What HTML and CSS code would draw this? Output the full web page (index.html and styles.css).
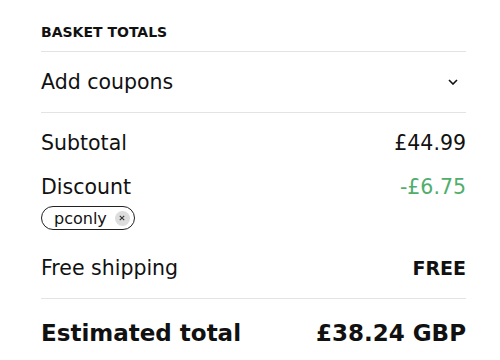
FILE: index.html
```html
<!DOCTYPE html>
<html>
<head>
<meta charset="utf-8">
<link rel="stylesheet" href="styles.css">
</head>
<body>
<div class="totals">
  <h2 class="title">BASKET TOTALS</h2>
  <div class="coupons">
    <span>Add coupons</span>
    <svg class="chev" width="10" height="6" viewBox="0 0 10 6"><path d="M1 1l4 4 4-4" fill="none" stroke="#111" stroke-width="1.6"/></svg>
  </div>
  <div class="lines">
    <div class="row"><span>Subtotal</span><span>£44.99</span></div>
    <div class="row disc"><span>Discount</span><span class="green">-£6.75</span></div>
    <div class="chip">pconly <span class="x"><svg width="6" height="6" viewBox="0 0 6 6"><path d="M0.8 0.8l4.4 4.4M5.2 0.8l-4.4 4.4" stroke="#333" stroke-width="1.1"/></svg></span></div>
    <div class="row ship"><span>Free shipping</span><span class="strong">FREE</span></div>
  </div>
  <div class="total"><span>Estimated total</span><span>£38.24 GBP</span></div>
</div>
</body>
</html>
```
FILE: styles.css
```css
body { margin: 0; background: #fff; color: #111; font-family: "DejaVu Sans", sans-serif; }
.totals { padding: 0 34px 0 41px; }
.title { margin: 0; padding: 24px 0 11px; font-size: 14px; line-height: 16px; font-weight: 700; border-bottom: 1px solid #e3e3e3; }
.coupons { height: 60px; display: flex; align-items: center; justify-content: space-between; font-size: 20.5px; border-bottom: 1px solid #e3e3e3; }
.chev { margin-right: 8px; }
.lines { padding: 19px 0 19px; border-bottom: 1px solid #e3e3e3; }
.row { display: flex; justify-content: space-between; align-items: center; font-size: 20.5px; line-height: 22px; }
.disc { margin-top: 22px; }
.green { color: #4fae6c; }
.chip { display: inline-flex; align-items: center; gap: 8px; margin-top: 8px; height: 22px; padding: 0 4px 0 12px; border: 1px solid #222; border-radius: 12px; font-size: 16px; }
.x { width: 15px; height: 15px; border-radius: 50%; background: #ddd; display: flex; align-items: center; justify-content: center; }
.ship { margin-top: 27px; }
.strong { font-weight: 700; font-size: 19px; }
.total { display: flex; justify-content: space-between; padding-top: 19px; font-size: 23px; line-height: 30px; font-weight: 700; }
```
